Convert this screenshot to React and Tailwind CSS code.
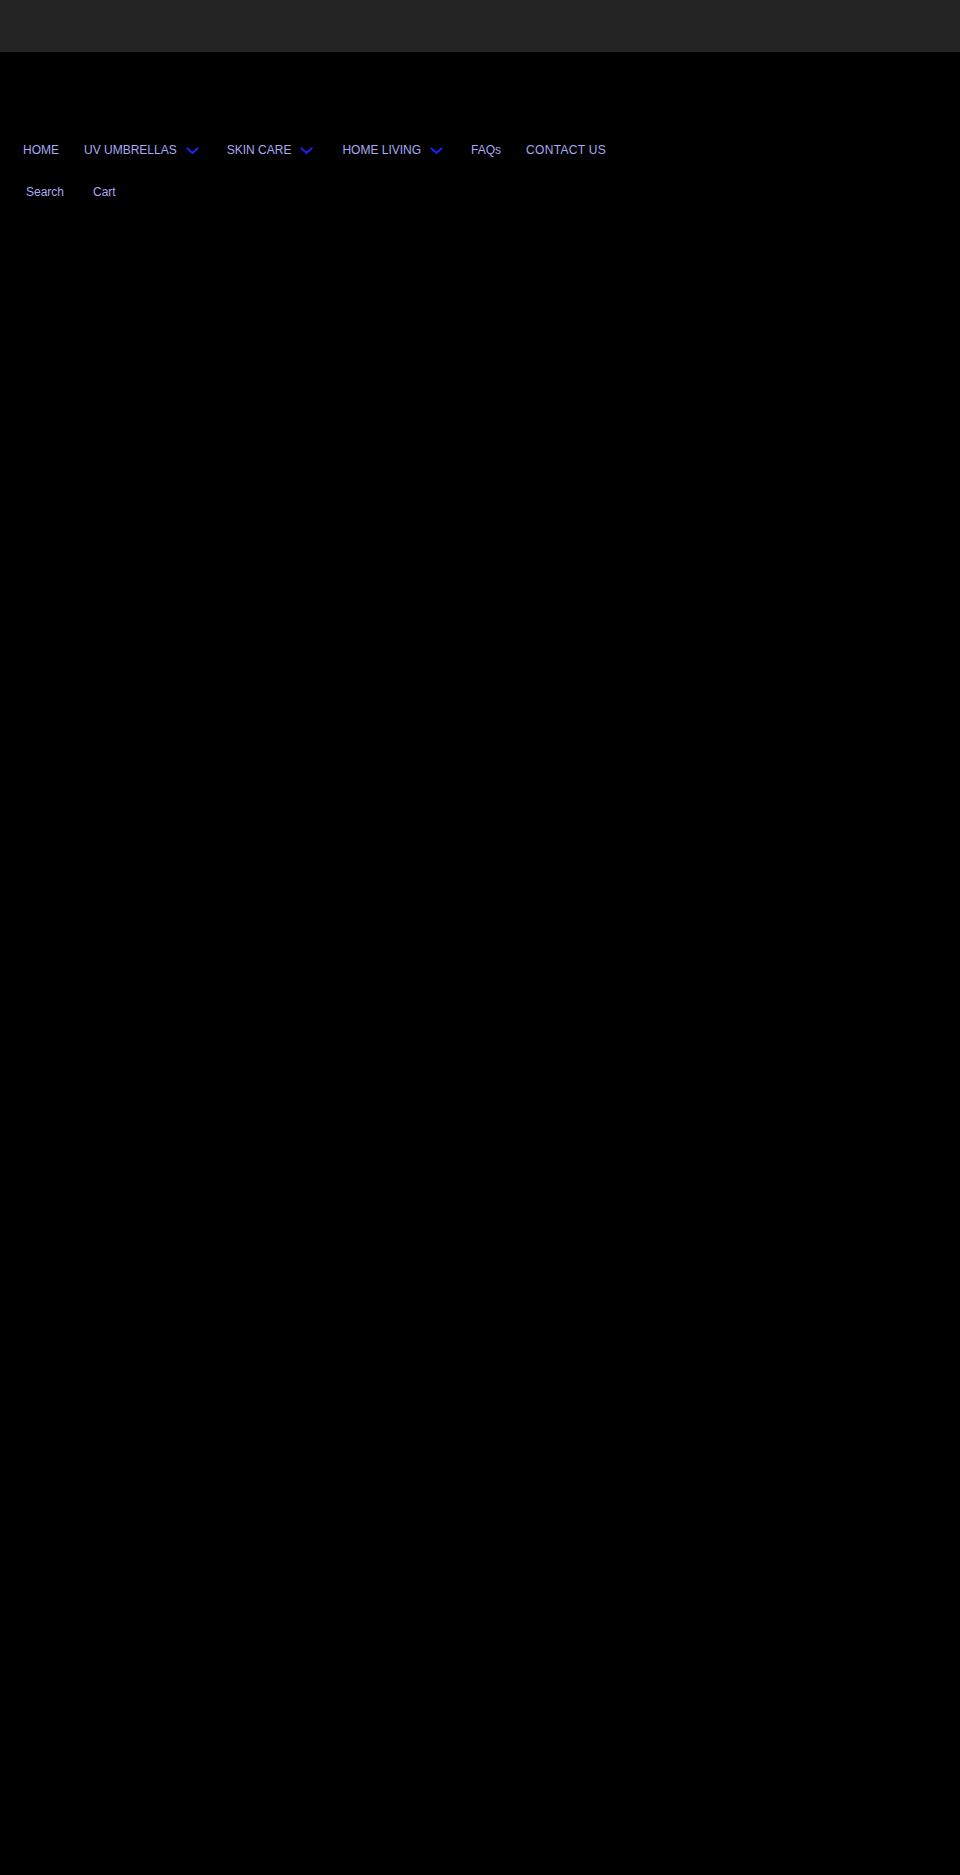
import React from "react";

const Chevron = () => (
  <svg width="13" height="8" viewBox="0 0 13 8" className="ml-[9px] mt-[2px]">
    <path d="M1.5 1.5 L6.5 6 L11.5 1.5" stroke="#1f1fe6" strokeWidth="2.3" fill="none" strokeLinecap="round" strokeLinejoin="round" />
  </svg>
);

const Item = ({ label, chevron, className = "" }) => (
  <a className={`flex items-center text-[12px] text-[#a9a9f4] uppercase ${className}`}>
    <span>{label}</span>
    {chevron && <Chevron />}
  </a>
);

export default function App() {
  return (
    <div className="min-h-[1875px] bg-black" style={{ fontFamily: '"Liberation Sans", Arial, sans-serif' }}>
      <div className="h-[52px] bg-[#242424]" />
      <nav className="pt-[90px] pl-[23px]">
        <div className="flex items-center h-[16px]">
          <Item label="Home" />
          <Item label="UV Umbrellas" chevron className="ml-[25px]" />
          <Item label="Skin Care" chevron className="ml-[28px]" />
          <Item label="Home Living" chevron className="ml-[29px]" />
          <a className="ml-[28px] text-[12px] text-[#a9a9f4]">FAQs</a>
          <Item label="Contact Us" className="ml-[25px] tracking-[0.3px]" />
        </div>
        <div className="flex items-center h-[16px] mt-[26px] pl-[3px]">
          <a className="text-[12px] text-[#a9a9f4]">Search</a>
          <a className="ml-[29px] text-[12px] text-[#a9a9f4]">Cart</a>
        </div>
      </nav>
    </div>
  );
}
